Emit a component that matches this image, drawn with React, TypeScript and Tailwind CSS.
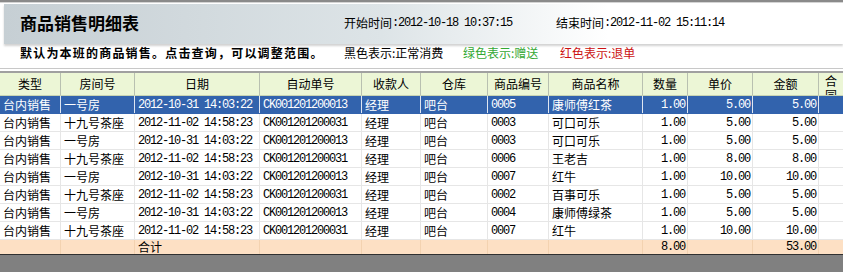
import React from "react";

const cols = "grid grid-cols-[61px_74px_125px_102px_59px_67px_61px_94px_45px_65px_66px_24px]";
const cjk = "font-['Noto_Sans_CJK_SC','Noto_Sans',sans-serif]";
const mono = "font-['Liberation_Mono','Noto_Sans_CJK_SC',monospace] tracking-[-1.2px] text-[12px]";

type Row = [string, string, string, string, string, string, string, string, string, string, string];

const rows: Row[] = [
  ["台内销售", "一号房", "2012-10-31 14:03:22", "CK001201200013", "经理", "吧台", "0005", "康师傅红茶", "1.00", "5.00", "5.00"],
  ["台内销售", "十九号茶座", "2012-11-02 14:58:23", "CK001201200031", "经理", "吧台", "0003", "可口可乐", "1.00", "5.00", "5.00"],
  ["台内销售", "一号房", "2012-10-31 14:03:22", "CK001201200013", "经理", "吧台", "0003", "可口可乐", "1.00", "5.00", "5.00"],
  ["台内销售", "十九号茶座", "2012-11-02 14:58:23", "CK001201200031", "经理", "吧台", "0006", "王老吉", "1.00", "8.00", "8.00"],
  ["台内销售", "一号房", "2012-10-31 14:03:22", "CK001201200013", "经理", "吧台", "0007", "红牛", "1.00", "10.00", "10.00"],
  ["台内销售", "十九号茶座", "2012-11-02 14:58:23", "CK001201200031", "经理", "吧台", "0002", "百事可乐", "1.00", "5.00", "5.00"],
  ["台内销售", "一号房", "2012-10-31 14:03:22", "CK001201200013", "经理", "吧台", "0004", "康师傅绿茶", "1.00", "5.00", "5.00"],
  ["台内销售", "十九号茶座", "2012-11-02 14:58:23", "CK001201200031", "经理", "吧台", "0007", "红牛", "1.00", "10.00", "10.00"],
];

const headers = ["类型", "房间号", "日期", "自动单号", "收款人", "仓库", "商品编号", "商品名称", "数量", "单价", "金额"];
const monoCols = new Set([2, 3, 6, 8, 9, 10]);
const rightCols = new Set([8, 9, 10]);

export default function App() {
  return (
    <div className={`w-[843px] h-[272px] bg-[#808080] flex flex-col overflow-hidden ${cjk} text-black`}>
      <div className="bg-white">
        <div className="h-[2px] bg-[#8a8a8a]" />
        <div className="h-[1px] bg-[#d4d4d4]" />
        <div className="pl-[4px] pt-[1px]">
          <div className="h-[40px] bg-gradient-to-r from-[#c6cfd4] via-[#dde4e7] via-45% to-white to-72% shadow-[0_2px_2px_rgba(0,0,0,0.18)] flex items-center pb-[3px]">
            <div className="w-[340px] pl-[16px] text-[17px] font-bold leading-[20px]">商品销售明细表</div>
            <div className="w-[212px] text-[12px] leading-[14px] flex items-center">
              <span>开始时间</span>
              <span className={mono}>:2012-10-18 10:37:15</span>
            </div>
            <div className="text-[12px] leading-[14px] flex items-center">
              <span>结束时间</span>
              <span className={mono}>:2012-11-02 15:11:14</span>
            </div>
          </div>
        </div>
        <div className="h-[16px] flex items-center pt-[2px]">
          <div className="w-[344px] pl-[20px] text-[12px] font-bold tracking-[1.2px] leading-[14px]">默认为本班的商品销售。点击查询，可以调整范围。</div>
          <div className="w-[119px] text-[12px] leading-[14px]">黑色表示:正常消费</div>
          <div className="w-[97px] text-[12px] leading-[14px] text-[#33a833]">绿色表示:赠送</div>
          <div className="text-[12px] leading-[14px] text-[#cc1111]">红色表示:退单</div>
        </div>
        <div className="h-[8px]" />
        <div className="h-[1px] bg-[#c8c8c8]" />
        <div className="h-[2px] bg-white" />
        <div className="h-[2px] bg-[#a0a0a0]" />
      </div>

      <div className="bg-white">
        <div className={`${cols} h-[23px] bg-[#ecf6d6] border-b border-[#c8d4b4]`}>
          {headers.map((h) => (
            <div key={h} className="border-r border-[#b8c0b0] flex items-center justify-center text-[12px] leading-[14px]">
              {h}
            </div>
          ))}
          <div className="overflow-hidden flex flex-col items-center pt-[1px] h-[22px] text-[12px] leading-[14px]">
            <span>合</span>
            <span>同</span>
          </div>
        </div>

        {rows.map((r, i) => {
          const sel = i === 0;
          return (
            <div
              key={i}
              className={`${cols} h-[18px] border-b ${sel ? "bg-[#3263ad] text-white border-[#3263ad]" : "bg-white border-[#e6e6e6]"}`}
            >
              {r.map((c, j) => (
                <div
                  key={j}
                  className={`border-r ${sel ? "border-[#dfe6f2]" : "border-[#e6e6e6]"} flex items-center overflow-hidden whitespace-nowrap ${
                    rightCols.has(j) ? "justify-end pr-[2px]" : "pl-[3px]"
                  } ${monoCols.has(j) ? mono : "text-[12px]"} leading-[14px]`}
                >
                  {c}
                </div>
              ))}
              <div />
            </div>
          );
        })}

        <div className={`${cols} h-[15px] bg-[#fde0c4] border-b border-[#303030]`}>
          {Array.from({ length: 11 }).map((_, j) => (
            <div
              key={j}
              className={`border-r border-[#f3d2b0] flex items-center whitespace-nowrap leading-[12px] ${
                rightCols.has(j) ? `justify-end pr-[2px] ${mono}` : "pl-[3px] text-[12px]"
              }`}
            >
              {j === 2 ? "合计" : j === 8 ? "8.00" : j === 10 ? "53.00" : ""}
            </div>
          ))}
          <div />
        </div>
      </div>
    </div>
  );
}
